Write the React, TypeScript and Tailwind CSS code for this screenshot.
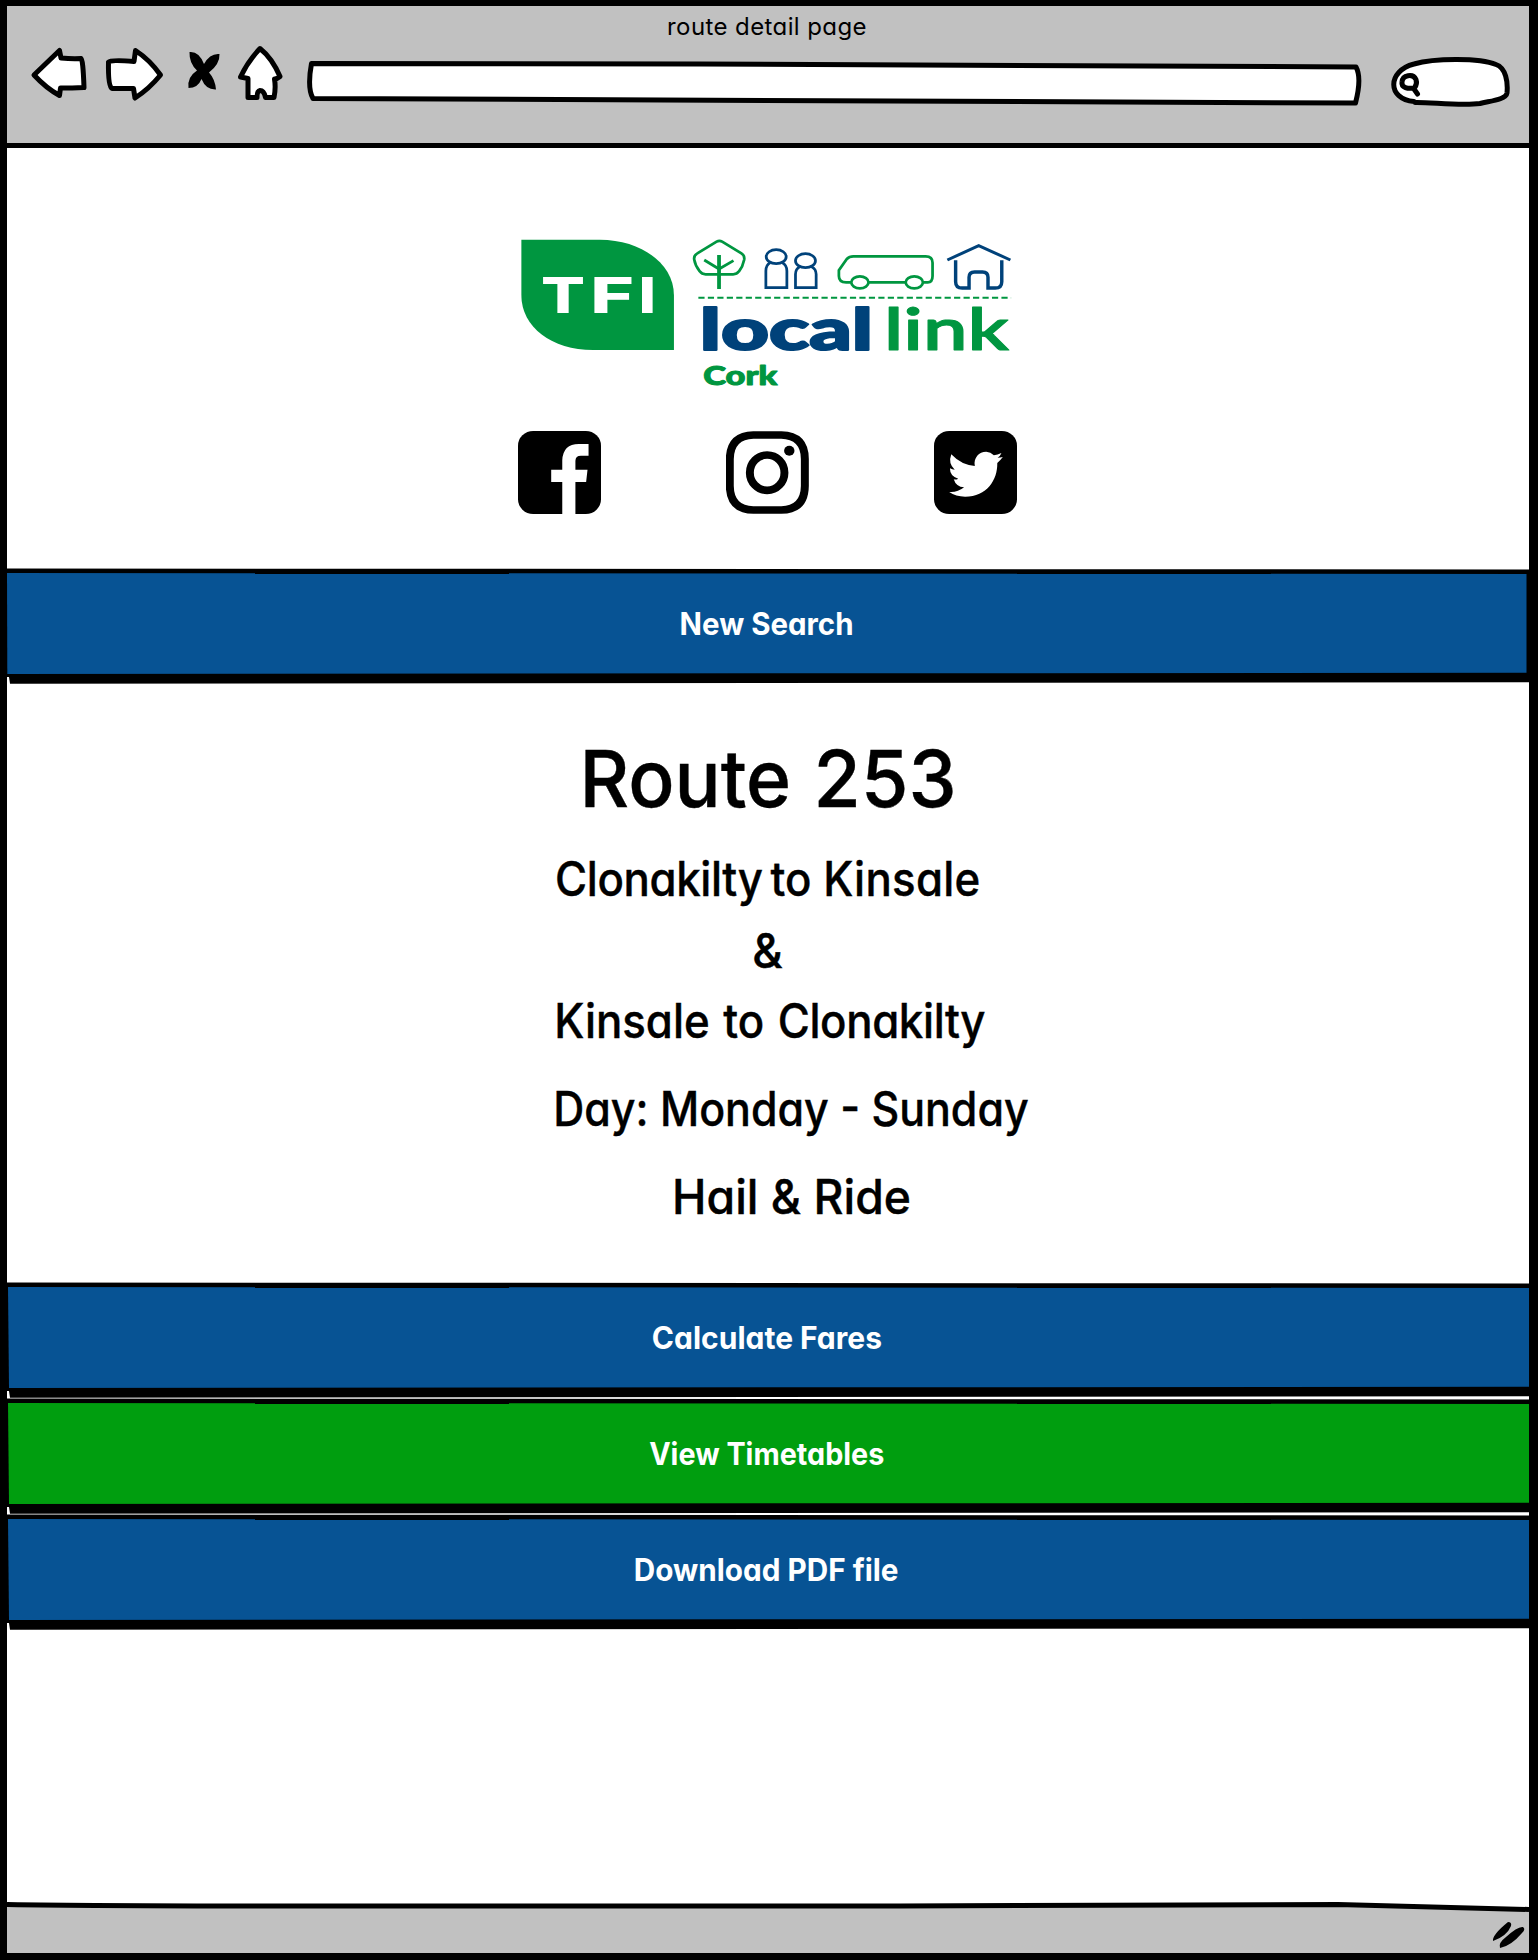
import React from "react";

const sketch = "font-['Inter',sans-serif] [font-feature-settings:'cv11'] leading-none whitespace-nowrap";

const outerClip = "[clip-path:polygon(0_0.5px,100%_1.5px,100%_114.3px,3px_115.7px,2px_109px,0_109px)]";
const fillClip = "[clip-path:polygon(1px_5px,1522px_6px,1522px_104.7px,2px_106px)]";
const searchFillClip = "[clip-path:polygon(0_5px,1519.5px_6px,1519.5px_104.7px,0.3px_106px)]";

type BarProps = { label: string; color: string; fit: string; fill?: string };

function BarButton({ label, color, fit, fill = fillClip }: BarProps) {
  return (
    <button className={`block h-[116px] w-full shrink-0 bg-black ${outerClip}`}>
      <span className={`flex h-full w-full items-center justify-center text-white ${color} ${fill}`}>
        <span className={`${sketch} mr-[3px] mb-[5px] text-[31px] font-bold ${fit}`}>{label}</span>
      </span>
    </button>
  );
}

function Header() {
  return (
    <header className="flex h-[142px] shrink-0 flex-col border-b-[5px] border-black bg-[#c1c1c1]">
      <div className={`${sketch} mt-[9px] mr-[2px] text-center text-[24px] tracking-[0.4px]`}>route detail page</div>
      <svg className="mt-[6px] h-[62px] w-[1522px]" viewBox="7 45 1522 62" fill="#fff" stroke="#000" strokeWidth="5" strokeLinejoin="round" strokeLinecap="round" aria-hidden>
        <path d="M34 75 L59.5 50.5 L61 58 Q72 59 81 58.500 Q83 59 84 87.500 Q72 88 60.500 88 L59.500 95.500 Q46 88 34 75Z" />
        <path d="M108.500 62 Q110 59.500 134 61.500 L135.500 50.500 Q150 60 160.500 75 Q149 89 135 98 L133.500 88.500 H112 Q108 86 108.500 62Z" />
        <path stroke="none" fill="#000" d="M189.500 52 Q199 51 204 64 Q210 53 219.500 54 Q220 64 209 72.500 Q215 79 216 89.500 Q206 90 201.500 79 Q198 88 188.500 88 Q187 77 197 70.500 Q189 63 189.500 52Z" />
        <path d="M260 48.500 Q272 58 280 76.500 Q277 79 274.500 79 Q276 88 274 97.500 H265.500 Q264 90.500 260 90.500 Q257 91 257 97.500 H248 V78.500 L240.500 77 Q248 61 260 48.500Z" />
        <path d="M311.500 63.500 L700 64 L1356 67 Q1362 78 1355.500 103 L313 98.500 Q307 88 311.500 63.500Z" />
        <path d="M1414 101.500 C1387 99 1387 71 1414 64 C1435 58 1480 58 1496 64.500 C1506 68 1508 82 1507 93 C1506 100 1489 101 1480 103.500 C1460 106 1430 102 1415 102.500" />
        <path fill="none" d="M1402 82 C1402.500 75 1413 73 1416 79.500 Q1417.500 84 1414.500 88 C1408 89 1401 88 1402 82Z M1414 89 L1417.500 94" />
      </svg>
    </header>
  );
}

function Logo() {
  return (
    <svg className="mt-[72px] ml-[493px] h-[180px] w-[540px] shrink-0" viewBox="0 0 1568 540" preserveAspectRatio="none" fill="none" strokeWidth="8" strokeLinejoin="round">
      <path fill="#009640" d="M62 59 H290 C410 59 505 132 505 225 V390 H270 C150 390 62 322 62 225Z" />
      <g fill="#fff" className="font-['Inter',sans-serif] font-extrabold" fontSize="147">
        <text x="119" y="278" textLength="128" lengthAdjust="spacingAndGlyphs">T</text>
        <text x="262" y="278" textLength="127" lengthAdjust="spacingAndGlyphs">F</text>
        <text x="402" y="278" textLength="51" lengthAdjust="spacingAndGlyphs">I</text>
      </g>
      <g stroke="#009640">
        <path d="M629 65 Q637 60 645 65 L701 100 Q711 106 709 119 Q705 140 694 154 Q688 163 677 163 H597 Q586 163 580 154 Q567 138 564 119 Q562 106 573 100Z" />
        <path strokeWidth="11" d="M636 105 V207" />
        <path d="M593 120 L636 147 L678 122" />
        <path d="M1019 187 H1005 Q984 187 984 168 V151 L1007 117 Q1014 109 1026 109 H1236 Q1256 109 1256 128 V168 Q1256 187 1242 187 H1229 M1176 187 H1071" />
        <ellipse cx="1045" cy="187" rx="25" ry="18" />
        <ellipse cx="1203" cy="187" rx="25" ry="18" />
        <path strokeWidth="6" strokeDasharray="18 9.500" d="M576 233 H1484" />
      </g>
      <g stroke="#00427a" strokeLinejoin="miter">
        <ellipse cx="802" cy="110" rx="29" ry="21" />
        <path d="M785 128 Q772 135 772 153 V203 H833 V153 Q833 135 819 128" />
        <ellipse cx="887" cy="122" rx="29" ry="21" />
        <path d="M871 140 Q858 147 858 163 V203 H918 V163 Q918 147 904 140" />
        <path strokeWidth="9" d="M1299 120 L1390 77 L1482 120" />
        <path strokeWidth="10" d="M1323 121 V185 Q1323 204 1342 204 H1362 V172 Q1362 156 1378 156 H1401 Q1417 156 1417 172 V204 H1438 Q1457 204 1457 185 V121" />
      </g>
      <text x="580" y="390" fill="#00427a" stroke="#00427a" strokeWidth="6" className="[font-family:Lato] font-black" fontSize="171" textLength="503" lengthAdjust="spacingAndGlyphs">local</text>
      <text x="1115" y="391" fill="#009640" stroke="#009640" strokeWidth="3" className="[font-family:Lato] font-semibold" fontSize="172" textLength="363" lengthAdjust="spacingAndGlyphs">link</text>
      <text x="590" y="494" fill="#009640" stroke="#009640" strokeWidth="3" className="[font-family:Lato] font-black" fontSize="78" textLength="215" lengthAdjust="spacingAndGlyphs">Cork</text>
    </svg>
  );
}

function Social() {
  return (
    <div className="mt-[31px] mb-[54px] ml-[511px] flex shrink-0 gap-[125px]">
      <svg className="h-[83px] w-[83px]" viewBox="52 48 240 249" preserveAspectRatio="none">
        <rect x="52" y="48" width="240" height="249" rx="44" />
        <path fill="#fff" d="M180 298 V201 H148 V164 H180 V136 Q182 87 228 87 H256 V122 H234 Q218 122 218 138 V164 H253 L249 201 H218 V298Z" />
      </svg>
      <svg className="h-[83px] w-[83px]" viewBox="656 48 240 249" preserveAspectRatio="none" fill="none" stroke="#000" strokeWidth="23">
        <path d="M735 60 H816 Q884 62 884 132 V213 Q883 284 816 285 H735 Q668 284 667 213 V132 Q668 62 735 60Z" />
        <ellipse cx="775" cy="173" rx="50" ry="53" />
        <circle cx="839" cy="107" r="15" fill="#000" stroke="none" />
      </svg>
      <svg className="h-[83px] w-[83px]" viewBox="1260 48 240 249" preserveAspectRatio="none">
        <rect x="1260" y="48" width="240" height="249" rx="44" />
        <path fill="#fff" d="M1310 118 Q1339 150 1378 153 C1374 128 1390 110 1411 110 Q1424 111 1433 121 Q1444 120 1455 114 Q1452 123 1444 128 Q1452 128 1459 126 Q1452 136 1443 144 C1444 195 1413 245 1350 245 Q1323 245 1304 231 Q1328 233 1347 217 Q1324 216 1317 193 Q1324 195 1330 191 Q1306 184 1306 160 Q1313 164 1320 164 Q1300 146 1310 118Z" />
      </svg>
    </div>
  );
}

function RouteDetails() {
  return (
    <main className={`${sketch} flex h-[598px] shrink-0 flex-col items-center pr-px text-[47.5px] font-medium [-webkit-text-stroke:0.4px_#000]`}>
      <h1 className="mt-[55px] h-[79px] scale-x-[0.972] text-[79px] [word-spacing:2px]">Route 253</h1>
      <p className="mt-[37px] h-[48px] scale-x-[0.922]">
        <span className="[word-spacing:-4px]">
          <span className="tracking-[-0.4px]">Clonakilty</span> to
        </span>{" "}
        <span className="tracking-[0.3px]">Kinsale</span>
      </p>
      <p className="mt-[24px] h-[48px] scale-x-[0.98]">&amp;</p>
      <p className="mt-[22px] ml-[4px] h-[48px] scale-x-[0.922] [word-spacing:2px]">
        Kinsale to <span className="tracking-[-0.4px]">Clonakilty</span>
      </p>
      <p className="mt-[40px] ml-[46px] h-[48px] scale-x-[0.904]">Day: Monday - Sunday</p>
      <p className="mt-[40px] ml-[48px] h-[48px] scale-x-[0.975]">Hail &amp; Ride</p>
    </main>
  );
}

function Footer() {
  return (
    <footer className="mt-[272px] flex h-[51px] shrink-0 items-start justify-end bg-[#c1c1c1]">
      <svg className="h-[51px] w-[1522px]" viewBox="7 1902 1522 51" aria-hidden>
        <path fill="#fff" d="M7 1901 H1529 V1909 L1338 1904 H7Z" />
        <path fill="none" stroke="#000" strokeWidth="5" d="M7 1904.500 Q100 1906 300 1906 H900 L1338 1904.500 L1529 1909.500" />
        <path d="M1493 1941 Q1492 1935 1508 1922 Q1512 1922 1511 1926 Q1507 1936 1493 1941Z M1500 1948 Q1498 1943 1506 1937 Q1518 1926 1523 1927 Q1526 1929 1522 1933 Q1511 1946 1500 1948Z" />
      </svg>
    </footer>
  );
}

export default function App() {
  return (
    <div className="flex h-[1960px] w-[1538px] flex-col overflow-hidden border-t-[6px] border-r-[9px] border-b-[7px] border-l-[7px] border-black bg-white text-black">
      <Header />
      <Logo />
      <Social />
      <BarButton label="New Search" color="bg-[#075394]" fit="scale-x-[0.95]" fill={searchFillClip} />
      <RouteDetails />
      <BarButton label="Calculate Fares" color="bg-[#075394]" fit="scale-x-[0.968]" />
      <BarButton label="View Timetables" color="bg-[#009e0f]" fit="scale-x-[0.928]" />
      <BarButton label="Download PDF file" color="bg-[#075394]" fit="scale-x-[0.958]" />
      <Footer />
    </div>
  );
}
